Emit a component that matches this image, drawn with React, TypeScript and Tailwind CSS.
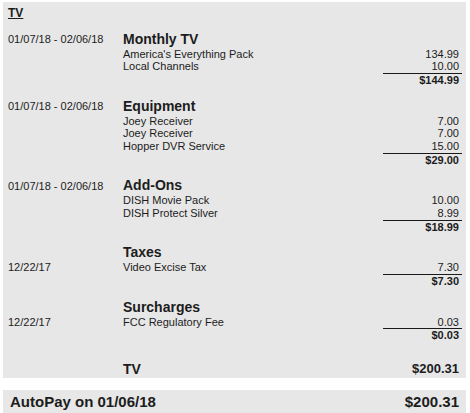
import React from "react";

type Item = { name: string; amount: string };
type Section = {
  date: string;
  dateOnItem?: boolean;
  title: string;
  items: Item[];
  subtotal: string;
};

const sections: Section[] = [
  {
    date: "01/07/18 - 02/06/18",
    title: "Monthly TV",
    items: [
      { name: "America's Everything Pack", amount: "134.99" },
      { name: "Local Channels", amount: "10.00" },
    ],
    subtotal: "$144.99",
  },
  {
    date: "01/07/18 - 02/06/18",
    title: "Equipment",
    items: [
      { name: "Joey Receiver", amount: "7.00" },
      { name: "Joey Receiver", amount: "7.00" },
      { name: "Hopper DVR Service", amount: "15.00" },
    ],
    subtotal: "$29.00",
  },
  {
    date: "01/07/18 - 02/06/18",
    title: "Add-Ons",
    items: [
      { name: "DISH Movie Pack", amount: "10.00" },
      { name: "DISH Protect Silver", amount: "8.99" },
    ],
    subtotal: "$18.99",
  },
  {
    date: "12/22/17",
    dateOnItem: true,
    title: "Taxes",
    items: [{ name: "Video Excise Tax", amount: "7.30" }],
    subtotal: "$7.30",
  },
  {
    date: "12/22/17",
    dateOnItem: true,
    title: "Surcharges",
    items: [{ name: "FCC Regulatory Fee", amount: "0.03" }],
    subtotal: "$0.03",
  },
];

const ChargeSection = ({ s }: { s: Section }) => {
  return (
    <div className="grid grid-cols-[115px_1fr_79px] mb-[11px] text-[11px] leading-[12.65px]">
      <div className="self-center">{s.dateOnItem ? "" : s.date}</div>
      <div className="text-[14px] font-bold leading-[17px]">{s.title}</div>
      <div />
      {s.items.map((it, i) => (
        <React.Fragment key={i}>
          <div>{s.dateOnItem && i === 0 ? s.date : ""}</div>
          <div>{it.name}</div>
          <div className="text-right pr-[3px]">{it.amount}</div>
        </React.Fragment>
      ))}
      <div />
      <div />
      <div className="font-bold text-right pr-[3px] border-t border-[#1a1a1a]">{s.subtotal}</div>
    </div>
  );
};

export default function App() {
  return (
    <div
      className="w-[470px] h-[413px] overflow-hidden bg-white pt-[2px] pl-[3px] text-[#1c1c1c] leading-[1.15]"
      style={{ fontFamily: '"Liberation Sans", Arial, sans-serif' }}
    >
      <div className="w-[463px] bg-[#e7e7e7] pt-[5px] pl-[5px] pr-[4px] pb-[1px]">
        <p className="text-[12px] font-bold underline mb-[10px]">TV</p>
        {sections.map((s, i) => (
          <ChargeSection key={i} s={s} />
        ))}
        <div className="grid grid-cols-[115px_1fr_79px] items-center mt-[19px]">
          <div />
          <div className="text-[14px] font-bold">TV</div>
          <div className="text-[13px] font-bold text-right pr-[3px]">$200.31</div>
        </div>
      </div>
      <div className="w-[463px] mt-[12px] bg-[#e7e7e7] flex justify-between items-center pl-[7px] pr-[7px] h-[24px] text-[15px] font-bold">
        <span>AutoPay on 01/06/18</span>
        <span>$200.31</span>
      </div>
    </div>
  );
}
